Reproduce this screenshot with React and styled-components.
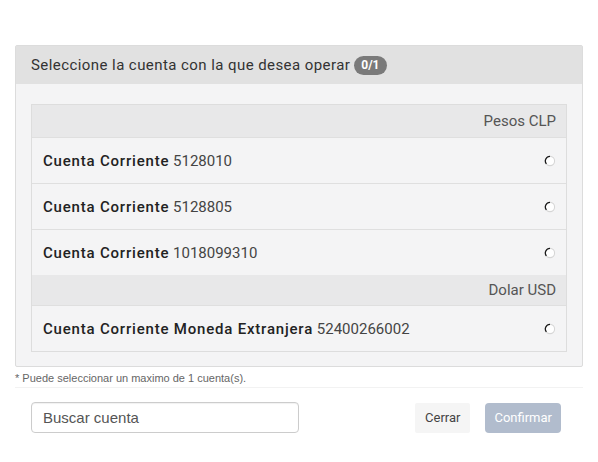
import React from 'react';
import styled, { createGlobalStyle } from 'styled-components';

const groups = [
  {
    currency: 'Pesos CLP',
    accounts: [
      { type: 'Cuenta Corriente', number: '5128010' },
      { type: 'Cuenta Corriente', number: '5128805' },
      { type: 'Cuenta Corriente', number: '1018099310' },
    ],
  },
  {
    currency: 'Dolar USD',
    accounts: [{ type: 'Cuenta Corriente Moneda Extranjera', number: '52400266002' }],
  },
];

const Radio = () => (
  <svg width="12" height="12" viewBox="0 0 12 12">
    <circle cx="6" cy="6" r="4.6" fill="#fff" stroke="#d6d6d6" strokeWidth="1.1" />
    <path d="M6 1.4 A4.6 4.6 0 0 0 2.4 8.9" fill="none" stroke="#1a1a1a" strokeWidth="1.3" />
  </svg>
);

export default function App() {
  return (
    <>
      <GlobalStyle />
      <Page>
        <Panel>
          <PanelHeader>
            Seleccione la cuenta con la que desea operar
            <Badge>0/1</Badge>
          </PanelHeader>
          <PanelBody>
            <Table>
              {groups.map((group, index) => (
                <React.Fragment key={group.currency}>
                  <GroupHeader first={index === 0}>{group.currency}</GroupHeader>
                  {group.accounts.map(account => (
                    <Row key={account.number}>
                      <AccountLabel>
                        <AccountType>{account.type}</AccountType> {account.number}
                      </AccountLabel>
                      <Radio />
                    </Row>
                  ))}
                </React.Fragment>
              ))}
            </Table>
          </PanelBody>
        </Panel>
        <Note>* Puede seleccionar un maximo de 1 cuenta(s).</Note>
        <Footer>
          <SearchInput placeholder="Buscar cuenta" />
          <Actions>
            <Button>Cerrar</Button>
            <Button primary>Confirmar</Button>
          </Actions>
        </Footer>
      </Page>
    </>
  );
}

const GlobalStyle = createGlobalStyle`
  body {
    margin: 0;
    background: #fff;
    font-family: Roboto, "Liberation Sans", sans-serif;
  }
`;
const Page = styled.div`
  padding: 45px 15px 0;
`;
const Panel = styled.div`
  border: 1px solid #dcdcdc;
  border-radius: 2px;
  background: #f4f4f5;
`;
const PanelHeader = styled.div`
  display: flex;
  align-items: center;
  gap: 4px;
  height: 38px;
  padding: 0 15px;
  background: #e1e1e1;
  font-size: 15px;
  letter-spacing: 0.43px;
  color: #333;
`;
const Badge = styled.span`
  display: inline-block;
  padding: 2px 7px 3px;
  border-radius: 10px;
  background: #7a7a7a;
  color: #fff;
  font-size: 12px;
  font-weight: 700;
  line-height: 14px;
  letter-spacing: 0;
`;
const PanelBody = styled.div`
  padding: 20px 15px 14px;
`;
const Table = styled.div`
  border: 1px solid #dddddd;
`;
const GroupHeader = styled.div`
  display: flex;
  align-items: center;
  justify-content: flex-end;
  height: ${({ first }) => (first ? '32px' : '30px')};
  padding: 0 10px;
  background: #e8e8e9;
  font-size: 15px;
  color: #555;
`;
const Row = styled.div`
  display: flex;
  align-items: center;
  justify-content: space-between;
  height: 45px;
  padding: 0 10px 0 11px;
  border-top: 1px solid #dfdfdf;
  background: #f4f4f5;
`;
const AccountLabel = styled.span`
  font-size: 15px;
  color: #444;
`;
const AccountType = styled.span`
  font-weight: 500;
  letter-spacing: 0.8px;
  color: #222;
`;
const Note = styled.div`
  padding: 5px 0 3px;
  border-bottom: 1px solid #f2f2f2;
  font-family: "Liberation Sans", Arial, sans-serif;
  font-size: 11px;
  color: #666;
`;
const Footer = styled.div`
  display: flex;
  align-items: center;
  justify-content: space-between;
  padding: 14px 22px 0 16px;
`;
const SearchInput = styled.input`
  box-sizing: border-box;
  width: 268px;
  height: 31px;
  padding: 0 11px;
  border: 1px solid #cccccc;
  border-radius: 4px;
  box-shadow: inset 0 1px 1px rgba(0, 0, 0, 0.06);
  font-family: "Liberation Sans", Arial, sans-serif;
  font-size: 15px;
  color: #555;
  outline: none;
  &::placeholder {
    color: #555;
  }
`;
const Actions = styled.div`
  display: flex;
  gap: 15px;
`;
const Button = styled.button`
  height: 30px;
  padding: 0 ${({ primary }) => (primary ? '9px' : '10px')};
  border: none;
  border-radius: ${({ primary }) => (primary ? '4px' : '2px')};
  background: ${({ primary }) => (primary ? '#b1bccd' : '#f5f5f5')};
  color: ${({ primary }) => (primary ? '#fff' : '#444')};
  font-family: Roboto, "Liberation Sans", sans-serif;
  font-size: 13px;
`;
